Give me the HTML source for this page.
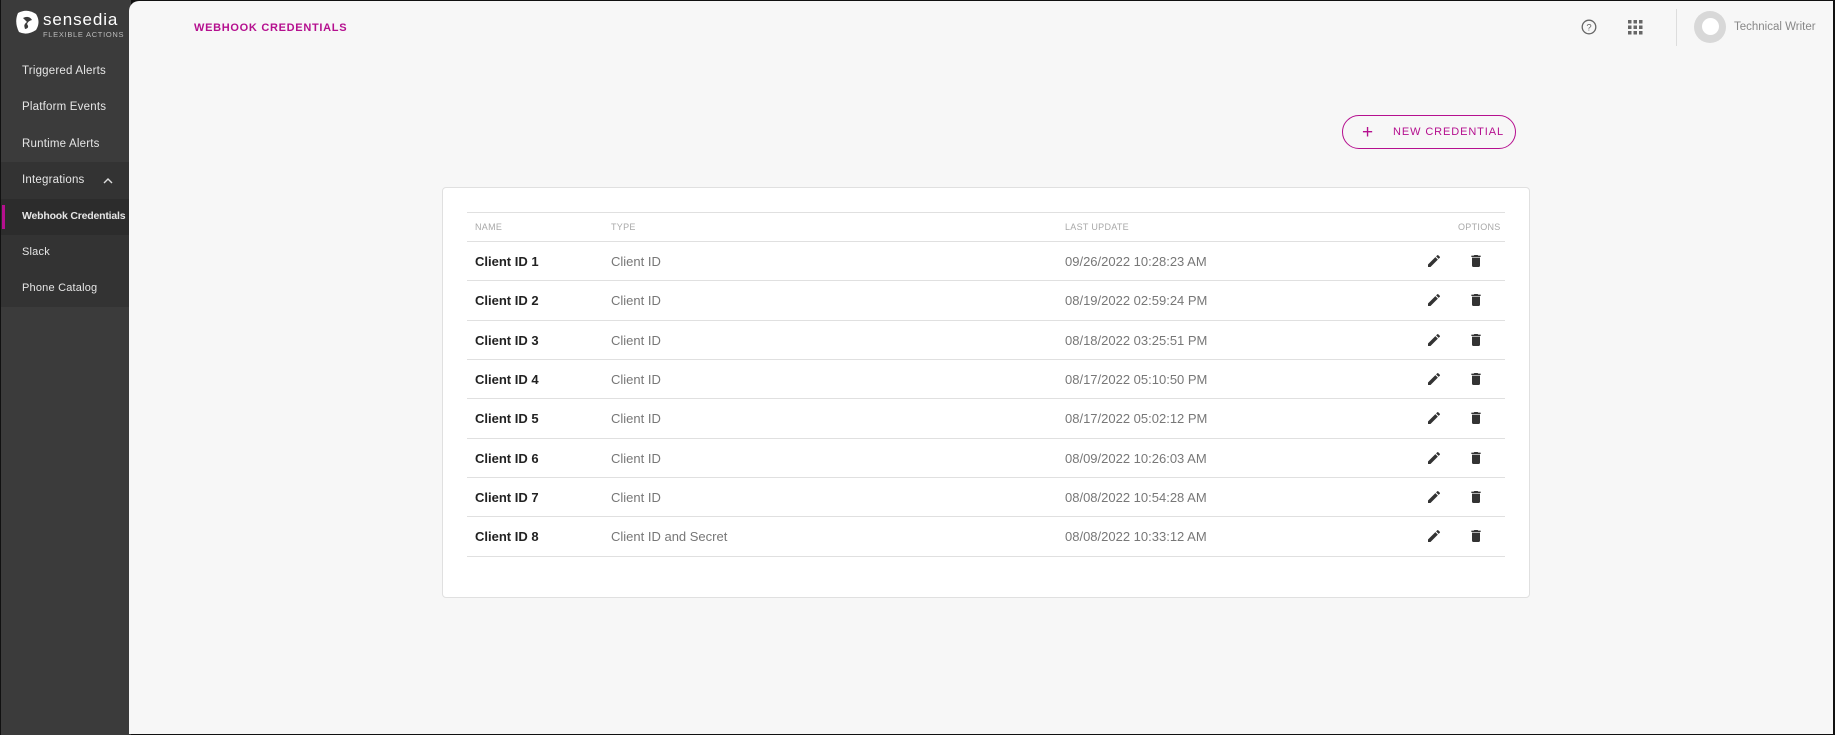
<!DOCTYPE html>
<html><head><meta charset="utf-8"><style>
*{margin:0;padding:0;box-sizing:border-box}
body{width:1835px;height:735px;background:#111;font-family:"Liberation Sans",Arial,sans-serif;position:relative;overflow:hidden}
#side{position:absolute;left:1px;top:0;width:130px;height:735px;background:#3b3b3b}
#main{position:absolute;left:129px;top:1px;width:1704px;height:733px;background:#f7f7f7;border-top-left-radius:10px}
.ni{position:absolute;left:21px;color:#e6e6e6;font-size:11.5px;letter-spacing:.2px;white-space:nowrap}
.abs{position:absolute;white-space:nowrap}
.row{position:absolute;left:467px;width:1038px;height:39.3px;border-top:1px solid #e0e0e0}
.row span{position:absolute;top:12px;font-size:13px;color:#777}
.row b{position:absolute;top:12px;left:8px;font-size:13px;color:#222}
.hd{position:absolute;top:222px;font-size:9px;color:#a8a8a8;letter-spacing:.3px}
</style></head><body>
<div id="side">
  <svg class="abs" style="left:13px;top:9px" width="26" height="26" viewBox="0 0 26 26"><path d="M4 4 Q13 -1 22 5 Q27 13 22 21 Q13 27 5 23 Q0 13 4 4Z" fill="#fff"/><path d="M9 9 Q15 6 18 11 Q14 12 13 15 Q16 19 11 20 Q9 15 13 13Z" fill="#3b3b3b"/></svg>
  <div class="abs" style="left:42px;top:10px;color:#fff;font-size:17px;letter-spacing:.9px">sensedia</div>
  <div class="abs" style="left:42px;top:30px;color:#bbb;font-size:7.5px;letter-spacing:.7px">FLEXIBLE ACTIONS</div>
  <div class="ni" style="top:65px">Triggered Alerts</div>
  <div class="ni" style="top:101px">Platform Events</div>
  <div class="ni" style="top:138px">Runtime Alerts</div>
  <div class="abs" style="left:0;top:162px;width:128px;height:145px;background:#333"></div>
  <div class="ni" style="top:174px">Integrations</div>
  <svg class="abs" style="left:102px;top:177px" width="10" height="7" viewBox="0 0 10 7"><path d="M1 6 L5 2 L9 6" stroke="#ddd" stroke-width="1.4" fill="none"/></svg>
  <div class="abs" style="left:0;top:199px;width:128px;height:36px;background:#2c2c2c"></div>
  <div class="abs" style="left:1px;top:205px;width:3px;height:24px;background:#b5108f"></div>
  <div class="ni" style="top:210px;font-weight:bold;font-size:10.5px;letter-spacing:-.2px">Webhook Credentials</div>
  <div class="ni" style="top:246px;font-size:11px">Slack</div>
  <div class="ni" style="top:282px;font-size:11px">Phone Catalog</div>
</div>
<div id="main"></div>
<div class="abs" style="left:194px;top:22px;color:#b5108f;font-weight:bold;font-size:11px;letter-spacing:.7px">WEBHOOK CREDENTIALS</div>
<svg class="abs" style="left:1581px;top:19px" width="16" height="16" viewBox="0 0 16 16"><circle cx="8" cy="8" r="6.8" stroke="#666" stroke-width="1.3" fill="none"/><text x="8" y="11.5" font-size="9.5" text-anchor="middle" fill="#666" font-family="Liberation Sans">?</text></svg>
<svg class="abs" style="left:1628px;top:20px" width="15" height="15" viewBox="0 0 15 15" fill="#666"><rect x="0" y="0" width="3.5" height="3.5"/><rect x="5.5" y="0" width="3.5" height="3.5"/><rect x="11" y="0" width="3.5" height="3.5"/><rect x="0" y="5.5" width="3.5" height="3.5"/><rect x="5.5" y="5.5" width="3.5" height="3.5"/><rect x="11" y="5.5" width="3.5" height="3.5"/><rect x="0" y="11" width="3.5" height="3.5"/><rect x="5.5" y="11" width="3.5" height="3.5"/><rect x="11" y="11" width="3.5" height="3.5"/></svg>
<div class="abs" style="left:1676px;top:9px;width:1px;height:37px;background:#ddd"></div>
<div class="abs" style="left:1694px;top:11px;width:32px;height:32px;border-radius:50%;background:#d8d8d8"></div>
<div class="abs" style="left:1702px;top:18px;width:17px;height:17px;border-radius:50%;background:#fff"></div>
<div class="abs" style="left:1734px;top:21px;color:#888;font-size:11.5px">Technical Writer</div>
<div class="abs" style="left:1342px;top:115px;width:174px;height:34px;border:1.3px solid #b5108f;border-radius:17px"></div>
<div class="abs" style="left:1362px;top:123px;color:#b5108f;font-size:19px;line-height:19px">+</div>
<div class="abs" style="left:1393px;top:126px;color:#b5108f;font-size:11px;letter-spacing:.9px">NEW CREDENTIAL</div>
<div class="abs" style="left:442px;top:187px;width:1088px;height:411px;background:#fff;border:1px solid #e0e0e0;border-radius:4px"></div>
<div class="abs" style="left:467px;top:212px;width:1038px;height:1px;background:#e0e0e0"></div>
<div class="hd" style="left:475px">NAME</div>
<div class="hd" style="left:611px">TYPE</div>
<div class="hd" style="left:1065px">LAST UPDATE</div>
<div class="hd" style="left:1458px">OPTIONS</div>
<div id="rows"></div>
<div class="abs" style="left:467px;top:556px;width:1038px;height:1px;background:#e0e0e0"></div>
<script>
var d=[["1","Client ID","09/26/2022 10:28:23 AM"],["2","Client ID","08/19/2022 02:59:24 PM"],["3","Client ID","08/18/2022 03:25:51 PM"],["4","Client ID","08/17/2022 05:10:50 PM"],["5","Client ID","08/17/2022 05:02:12 PM"],["6","Client ID","08/09/2022 10:26:03 AM"],["7","Client ID","08/08/2022 10:54:28 AM"],["8","Client ID and Secret","08/08/2022 10:33:12 AM"]];
var h="";d.forEach(function(r,i){var t=241+i*39.3;h+='<div class="row" style="top:'+t+'px"><b>Client ID '+r[0]+'</b><span style="left:144px">'+r[1]+'</span><span style="left:598px">'+r[2]+'</span>'+
'<svg style="position:absolute;left:959px;top:11px" width="16" height="16" viewBox="0 0 24 24"><path d="M3 17.25V21h3.75L17.81 9.94l-3.75-3.75L3 17.25zM20.71 7.04a1 1 0 000-1.41l-2.34-2.34a1 1 0 00-1.41 0l-1.83 1.83 3.75 3.75 1.83-1.83z" fill="#333"/></svg>'+
'<svg style="position:absolute;left:1001px;top:11px" width="16" height="16" viewBox="0 0 24 24"><path d="M6 19c0 1.1.9 2 2 2h8c1.1 0 2-.9 2-2V7H6v12zM19 4h-3.5l-1-1h-5l-1 1H5v2h14V4z" fill="#333"/></svg></div>';});
document.getElementById("rows").innerHTML=h;
</script>
</body></html>
